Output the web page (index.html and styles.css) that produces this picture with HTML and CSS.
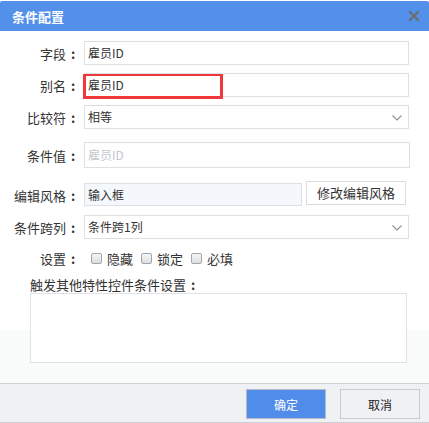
FILE: index.html
```html
<!DOCTYPE html>
<html lang="zh-CN">
<head>
<meta charset="utf-8">
<title>条件配置</title>
<link rel="stylesheet" href="styles.css">
</head>
<body>
<div class="dialog">
  <div class="topline"></div>
  <div class="header">
    <span class="title">条件配置</span>
    <svg class="close" width="10" height="10" viewBox="0 0 10 10"><path d="M1 1L9 9M9 1L1 9" stroke="#6a6f78" stroke-width="2.4" stroke-linecap="square"/></svg>
  </div>
  <div class="body">
    <div class="row r1"><span class="lbl">字段<span class="colon">:</span></span><div class="field">雇员ID</div></div>
    <div class="row r2"><span class="lbl">别名<span class="colon">:</span></span><div class="field">雇员ID<span class="mark"></span></div></div>
    <div class="row r3"><span class="lbl">比较符<span class="colon">:</span></span><div class="field select">相等<svg class="chev" width="10" height="6" viewBox="0 0 10 6"><path d="M0.5 0.5L5 5L9.5 0.5" fill="none" stroke="#8a8f96" stroke-width="1.1"/></svg></div></div>
    <div class="row r4"><span class="lbl">条件值<span class="colon">:</span></span><div class="field ph">雇员ID</div></div>
    <div class="row r5"><span class="lbl">编辑风格<span class="colon">:</span></span><div class="field ro">输入框</div><button class="edit-btn">修改编辑风格</button></div>
    <div class="row r6"><span class="lbl">条件跨列<span class="colon">:</span></span><div class="field select">条件跨1列<svg class="chev" width="10" height="6" viewBox="0 0 10 6"><path d="M0.5 0.5L5 5L9.5 0.5" fill="none" stroke="#8a8f96" stroke-width="1.1"/></svg></div></div>
    <div class="row r7"><span class="lbl">设置<span class="colon">:</span></span>
      <span class="cb first"></span><span class="cbt">隐藏</span>
      <span class="cb"></span><span class="cbt">锁定</span>
      <span class="cb"></span><span class="cbt">必填</span>
    </div>
    <div class="trigger">触发其他特性控件条件设置<span class="colon">:</span></div>
    <div class="textarea"></div>
  </div>
  <div class="footer">
    <button class="fbtn ok">确定</button>
    <button class="fbtn cancel">取消</button>
  </div>
</div>
</body>
</html>
```
FILE: styles.css
```css
* { box-sizing: border-box; }
html, body { margin: 0; padding: 0; background: #fff; }
body {
  font-family: "Noto Sans CJK SC", "Liberation Sans", sans-serif;
  color: #333;
  width: 429px;
  height: 423px;
  overflow: hidden;
}
.dialog { width: 429px; }
.topline { height: 1px; background: #fff; }
.header {
  height: 30px;
  background: #5290ea;
  border-radius: 2px 2px 0 0;
  display: flex;
  align-items: center;
  justify-content: space-between;
  padding: 0 10px 0 12px;
}
.title { color: #fff; font-size: 13px; font-weight: bold; letter-spacing: 0; }
.close { display: block; }
.body {
  height: 352px;
  padding-top: 10px;
  background: linear-gradient(#fff 0, #fff 299px, #fafbfb 299px);
}
.row { display: flex; align-items: center; height: 24px; margin-bottom: 8px; }
.lbl {
  width: 80px;
  flex: none;
  text-align: right;
  font-size: 13px;
  color: #333;
  white-space: nowrap;
}
.colon {
  display: inline-block;
  width: 14px;
  text-align: center;
  font-weight: bold;
}
.field {
  position: relative;
  margin-left: 4px;
  width: 325px;
  height: 24px;
  border: 1px solid #dde1e7;
  background: #fff;
  font-size: 12px;
  line-height: 22px;
  padding-left: 3px;
  color: #333;
}
.mark {
  position: absolute;
  left: -2px;
  top: 0px;
  width: 140px;
  height: 25px;
  border: 3px solid #f2373b;
  border-top-width: 2px;
}
.select .chev { position: absolute; right: 6px; top: 9px; }
.r3 { margin-bottom: 13px; }
.r4 { height: 26px; margin-bottom: 13px; }
.r4 .field { height: 26px; width: 326px; line-height: 24px; }
.ph { color: #c4c7cc; }
.r5 { height: 25px; align-items: flex-start; margin-bottom: 9px; }
.r5 .lbl { line-height: 25px; margin-top: 2px; }
.ro { width: 218px; height: 23px; margin-top: 2px; background: #f4f7fb; line-height: 21px; }
.edit-btn {
  margin-left: 4px;
  width: 100px;
  height: 24px;
  border: 1px solid #d9dce1;
  background: #fff;
  font-family: inherit;
  font-size: 13px;
  color: #333;
  padding: 0;
  line-height: 22px;
}
.r6 { margin-bottom: 10px; }
.r7 { height: 18px; margin-bottom: 10px; font-size: 13px; }
.cb {
  width: 11px;
  height: 11px;
  border: 1px solid #a3a6ab;
  border-radius: 2px;
  background: linear-gradient(#f6f6f6, #dcdde0);
  margin-left: 8px;
  margin-right: 5px;
  flex: none;
}
.cb.first { margin-left: 11px; }
.cbt { font-size: 13px; color: #333; }
.trigger { height: 16px; line-height: 16px; padding-left: 30px; font-size: 13px; }
.textarea {
  margin-left: 30px;
  width: 377px;
  height: 70px;
  border: 1px solid #dfe2e7;
  background: #fff;
}
.footer {
  height: 40px;
  border-top: 1px solid #cfd0d3;
  border-bottom: 1px solid #cfd0d3;
  background: #f0f1f4;
  display: flex;
  justify-content: flex-end;
  padding: 5px 9px 0 0;
  gap: 14px;
}
.fbtn {
  width: 80px;
  height: 30px;
  font-family: inherit;
  font-size: 12px;
  padding: 0;
}
.ok { background: #508ce9; border: 1px solid #b8bcc4; color: #fff; }
.cancel { background: #f0f1f4; border: 1px solid #c9cacd; color: #222; }
```
